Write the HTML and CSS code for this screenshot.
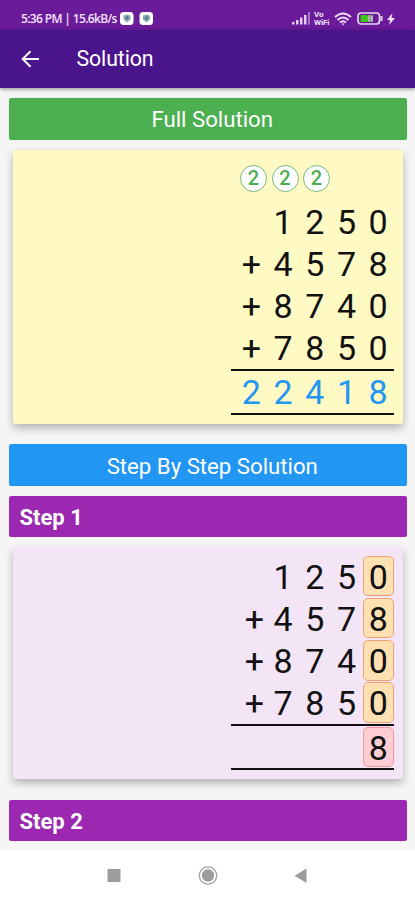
FILE: index.html
```html
<!DOCTYPE html>
<html lang="en">
<head>
<meta charset="utf-8">
<title>Solution</title>
<link rel="stylesheet" href="styles.css">
</head>
<body>
<div class="screen">
  <div class="status">
    <span class="clock">5:36 PM | 15.6kB/s</span>
    <svg class="app-icons" width="34" height="13" viewBox="0 0 34 13"><g fill="#fff"><rect width="13.500" height="13" rx="3.500"/><rect x="19.500" width="13.500" height="13" rx="3.500"/></g><g fill="#8fa9b0"><path d="M3.500 3.500 7 2.500l3.500 1v4L7 10.500 3.500 7.500zM23 3.500l3.500-1 3.500 1v4l-3.500 3-3.500-3z"/></g><g fill="#527b93"><circle cx="7" cy="6" r="1.700"/><circle cx="26.500" cy="6" r="1.700"/></g></svg>
    <div class="indicators">
      <svg class="signal" width="19" height="13" viewBox="0 0 19 13" fill="#e4cbee"><rect x="0" y="10" width="2.500" height="2.500"/><rect x="4" y="8" width="2.500" height="4.500"/><rect x="8" y="5.500" width="2.500" height="7"/><rect x="12" y="3" width="2.500" height="9.500"/><rect x="16" y="0" width="2" height="12.500" opacity=".5"/></svg>
      <span class="vowifi"><span>Vo</span><span>WiFi</span></span>
      <svg class="wifi" width="18" height="14" viewBox="0 0 18 14" fill="none" stroke="#f0ddf6" stroke-width="2"><path d="M1 5q8-7 16 0M3.500 8q5.500-5 11 0M6 10.500q3-2.500 6 0"/><path d="M7.500 11.500h3L9 13.500z" fill="#f0ddf6" stroke="none"/></svg>
      <svg class="battery" width="26" height="13" viewBox="0 0 26 13"><rect x="1" y="1" width="21.500" height="11" rx="3" fill="none" stroke="#e9d5ef" stroke-width="1.700"/><rect x="3.500" y="3" width="7.500" height="7" rx="1" fill="#42c51e"/><rect x="11" y="3" width="5" height="7" fill="#8b9d87"/><path d="M12 9V4.500M15 4v5" stroke="#ddd5df"/><path d="M24.500 4v5" stroke="#e9d5ef" stroke-width="2"/></svg>
      <svg width="8" height="12" viewBox="0 0 8 12" fill="#f3e3f8"><path d="M5.500 0 0 7h3.200L2 12l6-7H4.500z"/></svg>
    </div>
  </div>
  <header class="appbar">
    <svg width="20" height="18" viewBox="0 0 20 18" fill="none" stroke="#fff" stroke-width="2"><path d="M18 9H2M9.500 1.200 1.700 9l7.800 7.800"/></svg>
    <h1>Solution</h1>
  </header>
  <main>
    <div class="bar green">Full Solution</div>
    <section class="card full">
      <div class="carries"><span>2</span><span>2</span><span>2</span></div>
      <div class="row"><i></i><b>1</b><b>2</b><b>5</b><b>0</b></div>
      <div class="row"><i>+</i><b>4</b><b>5</b><b>7</b><b>8</b></div>
      <div class="row"><i>+</i><b>8</b><b>7</b><b>4</b><b>0</b></div>
      <div class="row"><i>+</i><b>7</b><b>8</b><b>5</b><b>0</b></div>
      <div class="result blue-text"><b>2</b><b>2</b><b>4</b><b>1</b><b>8</b></div>
    </section>
    <div class="bar blue">Step By Step Solution</div>
    <div class="bar purple">Step 1</div>
    <section class="card step">
      <div class="row"><i></i><b>1</b><b>2</b><b>5</b><b class="hl">0</b></div>
      <div class="row"><i>+</i><b>4</b><b>5</b><b>7</b><b class="hl">8</b></div>
      <div class="row"><i>+</i><b>8</b><b>7</b><b>4</b><b class="hl">0</b></div>
      <div class="row"><i>+</i><b>7</b><b>8</b><b>5</b><b class="hl">0</b></div>
      <div class="result"><i></i><b></b><b></b><b></b><b class="hl red">8</b></div>
    </section>
    <div class="bar purple second">Step 2</div>
  </main>
  <nav>
    <svg width="415" height="50" viewBox="0 0 415 50" fill="#9c9c9c"><rect x="107.500" y="19" width="13" height="13"/><circle cx="208" cy="25.500" r="6.200"/><circle cx="208" cy="25.500" r="8.700" fill="none" stroke="#9c9c9c" stroke-width="1.300"/><path d="M306.500 18.500v14.500L294.500 25.700z"/></svg>
  </nav>
</div>
</body>
</html>
```
FILE: styles.css
```css
* { box-sizing: border-box; }
body { margin: 0; font-family: Roboto, sans-serif; background: #f5f5f5; }
.screen { width: 415px; height: 900px; display: flex; flex-direction: column; overflow: hidden; }
.status { height: 30px; flex: none; background: #6a1b9a; display: flex; align-items: center; padding: 7px 20px 0 21px; color: #f3e3f8; }
.clock { font: 600 12px "Open Sans", sans-serif; letter-spacing: -0.65px; width: 99px; white-space: nowrap; }
.app-icons { flex: none; }
.indicators { margin-left: auto; display: flex; align-items: center; }
.signal { margin-right: 3px; }
.vowifi { display: flex; flex-direction: column; font-size: 8px; line-height: 8px; font-weight: 700; width: 18px; letter-spacing: -0.1px; }
.wifi { margin: 0 5px 0 2px; }
.battery { margin-right: 4px; }
.appbar { height: 58px; flex: none; background: #4a148c; display: flex; align-items: center; gap: 35.500px; padding: 0 0 0 21px; box-shadow: 0 1px 4px rgba(0,0,0,.45); position: relative; }
h1 { margin: 0; color: #fff; font-size: 21.300px; font-weight: 400; line-height: 26px; letter-spacing: -.1px; }
main { flex: 1; min-height: 0; overflow: hidden; padding: 9.500px 8.500px 0 9px; }
.bar { height: 42px; border-radius: 2.500px; color: #fff; font-size: 22.200px; line-height: 43px; text-align: center; padding-left: 9px; box-shadow: 0 0 1px rgba(0,0,0,.2); }
.green { background: #4caf50; }
.blue { background: #2196f3; margin-top: 20.500px; line-height: 44px; }
.purple { background: #9c27b0; margin-top: 9.500px; padding-left: 10.500px; text-align: left; font-weight: 700; font-size: 22px; height: 41.500px; }
.purple.second { margin-top: 21px; }
.card { margin: 10.500px 3.500px 0 4px; border-radius: 3px; box-shadow: 0 4px 8px rgba(0,0,0,.28); display: flex; flex-direction: column; align-items: flex-end; padding-right: 9px; font-size: 34px; color: #111; }
.full { height: 274px; margin-top: 10px; background: #fff9c4; padding-top: 15.500px; }
.step { height: 232px; margin-top: 9.500px; background: #f3e5f5; padding-top: 9px; }
.carries { display: flex; gap: 4.500px; margin-right: 64px; height: 35.500px; }
.carries span { width: 27px; height: 27px; border: 1px solid #73b878; border-radius: 50%; background: #fff; color: #4caf50; font-size: 20px; font-weight: 500; line-height: 25.500px; text-align: center; }
.row, .result { display: grid; grid-template-columns: repeat(5, 31.700px); justify-content: end; line-height: 42.300px; text-align: center; }
.row { height: 42.300px; }
.row i, .row b, .result b { font-style: normal; font-weight: 400; }
.result { width: 163.500px; height: 46px; border-top: 2px solid #111; border-bottom: 2px solid #111; margin-top: -.5px; line-height: 43px; }
.blue-text b { color: #2196f3; }
.step .row i { transform: translateX(3px); }
.hl { width: 30.500px; height: 40.500px; margin: 0 0 0 .8px; border: 1px solid #efa173; border-radius: 5px; background: #ffe0b2; }
.row .hl, .result .hl { line-height: 40.500px; }
.result .hl.red { background: #ffcdd2; border-color: #f294a0; margin-top: .5px; }
nav { height: 50px; flex: none; background: #fff; }
nav svg { display: block; }
```
